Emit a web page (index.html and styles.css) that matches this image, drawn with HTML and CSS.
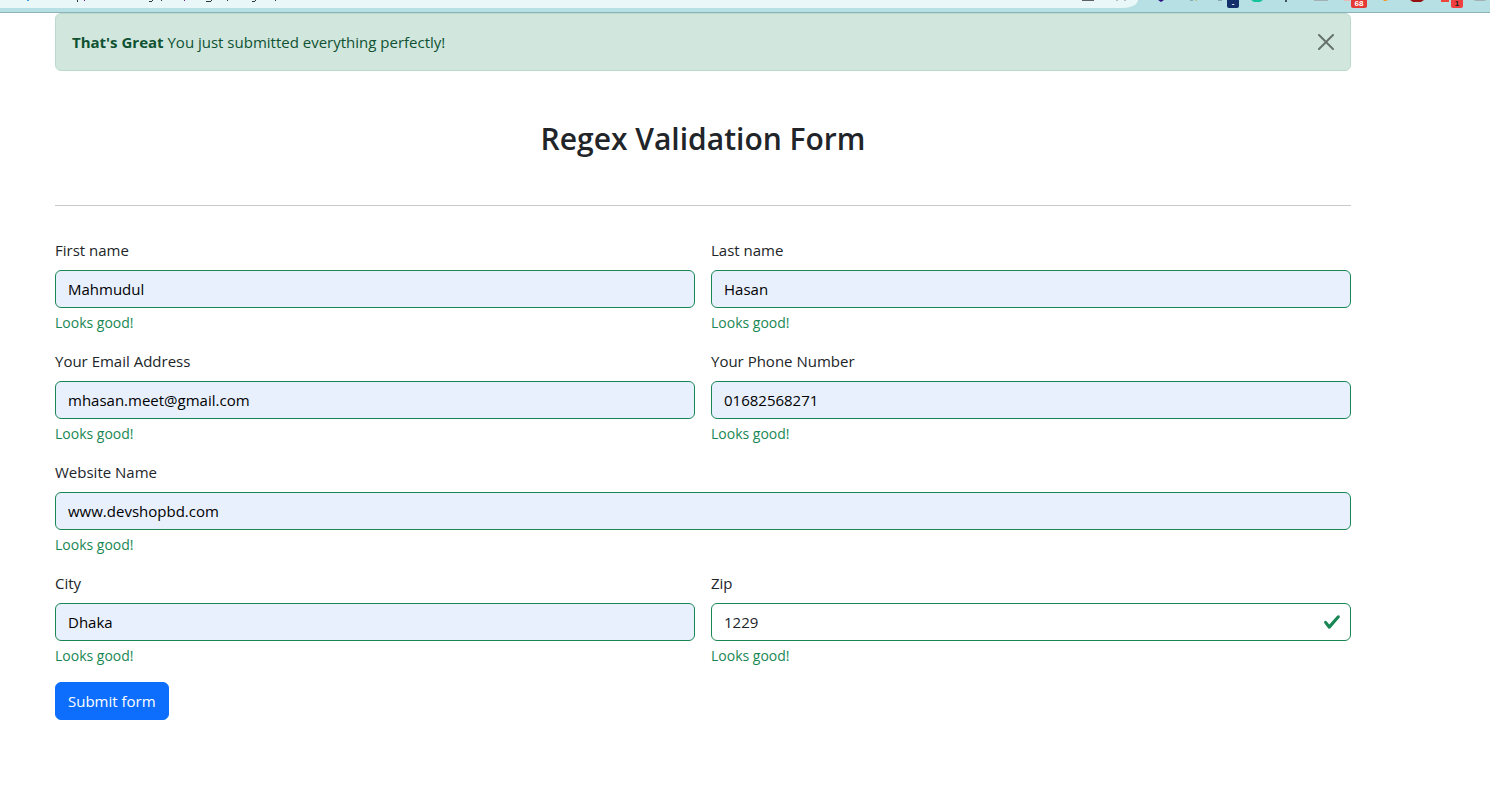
FILE: index.html
```html
<!DOCTYPE html>
<html lang="en">
<head>
<meta charset="utf-8">
<title>Regex Validation Form</title>
<link rel="stylesheet" href="styles.css">
</head>
<body>
<header class="toolbar">
  <div class="address">
    <svg width="290" height="4" aria-hidden="true" fill="#2d3338">
      <path fill="#3b9be8" d="M27 0h2v1h-2z"/>
      <path d="M77 0h1v2h-1zM149 1h3v1h-3zM152 0h1v1h-1zM161 0h1v1h-1zM206 1h5v1h-5zM211 0h1v1h-1zM227 0h1v1h-1zM252 1h3v1h-3zM255 0h1v1h-1zM275 0h1v1h-1z"/>
      <path fill="#701a75" d="M84 0h1v1h-1zM184 0h1v1h-1z"/>
    </svg>
    <svg width="56" height="4" aria-hidden="true">
      <path fill="#5f6368" d="M0 0h12v1h-12z"/>
      <path fill="#b4bdc0" d="M34 0h2v1h-2zM42 0h2v1h-2z"/>
    </svg>
  </div>
  <div class="extensions">
    <svg width="352" height="12" aria-hidden="true">
      <path fill="#2a1080" d="M20 0h6l-3 2z"/>
      <path fill="#8aa9b5" d="M52 0h3v1h-3zM80 0h4v1h-4z"/>
      <path fill="#b9c98f" d="M57 0h2v1h-2z"/>
      <path fill="#15c39a" d="M113 0h12l-3 2h-6z"/>
      <path fill="#44525a" d="M147 0h2v2h-2z"/>
      <path fill="#a5b0b4" d="M176 0h14v1h-14z"/>
      <path fill="#e9b8b4" d="M206 0h6v1h-6z"/>
      <path fill="#f79824" d="M245 0h5l-2 1h-2z"/>
      <path fill="#951111" d="M272 0h14l-3 2h-8z"/>
      <path fill="#f04438" d="M303 0h8v2h-8z"/>
      <path fill="#a5b0b4" d="M335 0h14l-3 1h-8z"/>
    </svg>
    <span class="badge badge-navy">-</span>
    <span class="badge badge-count">68</span>
    <span class="badge badge-one">1</span>
  </div>
</header>
<main class="page">
  <div class="container">
    <div class="alert" role="alert">
      <p class="alert-text"><strong>That's Great</strong> You just submitted everything perfectly!</p>
      <button class="close" type="button" aria-label="Close">
        <svg width="16" height="16" viewBox="0 0 16 16" aria-hidden="true"><path d="M.293.293a1 1 0 0 1 1.414 0L8 6.586 14.293.293a1 1 0 1 1 1.414 1.414L9.414 8l6.293 6.293a1 1 0 0 1-1.414 1.414L8 9.414l-6.293 6.293a1 1 0 0 1-1.414-1.414L6.586 8 .293 1.707a1 1 0 0 1 0-1.414z"/></svg>
      </button>
    </div>
    <h1 class="title">Regex Validation Form</h1>
    <hr class="rule">
    <form class="form">
      <div class="field">
        <label for="first">First name</label>
        <input class="control filled" id="first" type="text" value="Mahmudul">
        <div class="feedback">Looks good!</div>
      </div>
      <div class="field">
        <label for="last">Last name</label>
        <input class="control filled" id="last" type="text" value="Hasan">
        <div class="feedback">Looks good!</div>
      </div>
      <div class="field">
        <label for="email">Your Email Address</label>
        <input class="control filled" id="email" type="text" value="mhasan.meet@gmail.com">
        <div class="feedback">Looks good!</div>
      </div>
      <div class="field">
        <label for="phone">Your Phone Number</label>
        <input class="control filled" id="phone" type="text" value="01682568271">
        <div class="feedback">Looks good!</div>
      </div>
      <div class="field wide">
        <label for="site">Website Name</label>
        <input class="control filled" id="site" type="text" value="www.devshopbd.com">
        <div class="feedback">Looks good!</div>
      </div>
      <div class="field">
        <label for="city">City</label>
        <input class="control filled" id="city" type="text" value="Dhaka">
        <div class="feedback">Looks good!</div>
      </div>
      <div class="field">
        <label for="zip">Zip</label>
        <div class="checked">
          <input class="control" id="zip" type="text" value="1229">
          <svg class="tick" viewBox="0 0 8 8" aria-hidden="true"><path fill="#198754" d="M2.3 6.73.6 4.53c-.4-1.04.46-1.4 1.1-.8l1.1 1.4 3.4-3.8c.6-.63 1.6-.27 1.2.7l-4 4.6c-.43.5-.8.4-1.1.1z"/></svg>
        </div>
        <div class="feedback">Looks good!</div>
      </div>
      <div class="wide">
        <button class="submit" type="submit">Submit form</button>
      </div>
    </form>
  </div>
</main>
</body>
</html>
```
FILE: styles.css
```css
* { box-sizing: border-box; }

body {
  margin: 0;
  background: #fff;
  color: #212529;
  font-family: "Segoe UI", "Open Sans", "Noto Sans", sans-serif;
  font-size: 15px;
  line-height: 24px;
}

.toolbar {
  display: flex;
  height: 13px;
  background: #b7e0e4;
  border-bottom: 1px solid #8db3b9;
}

.address {
  display: flex;
  flex: 1;
  justify-content: space-between;
  height: 8px;
  background: #eaf7f8;
  border-bottom-right-radius: 16px 8px;
}

.extensions { position: relative; display: flex; }

.badge {
  position: absolute;
  top: 0;
  height: 8px;
  border-radius: 0 0 2px 2px;
  color: #fff;
  font-family: "Liberation Sans", sans-serif;
  font-size: 8px;
  font-weight: 700;
  line-height: 8px;
  text-align: center;
}

.badge-navy { left: 89px; width: 12px; background: #14306b; }
.badge-count { left: 213px; width: 16px; background: #e53935; }
.badge-one { left: 313px; width: 12px; background: #f04040; color: #222; }

.page { padding-right: 84px; }

.container {
  max-width: 1320px;
  margin: 0 auto;
  padding: 0 12px;
}

.alert {
  display: flex;
  justify-content: space-between;
  align-items: center;
  padding: 16px;
  border: 1px solid #badbcc;
  border-radius: 6px;
  background: #d1e7dd;
  color: #0f5132;
}

.alert-text { margin: 0; }

.close {
  display: flex;
  padding: 0;
  border: 0;
  background: none;
  opacity: 0.5;
}

.title {
  margin: 48px 0 0;
  font-size: 30px;
  font-weight: 600;
  line-height: 40px;
  text-align: center;
}

.rule {
  margin: 46px 0 32px;
  border: 0;
  border-top: 1px solid #c8c9ca;
}

.form {
  display: grid;
  grid-template-columns: 1fr 1fr;
  gap: 16px;
}

.wide { grid-column: 1 / -1; }

.field { display: flex; flex-direction: column; }

.field label { margin-bottom: 8px; }

.control {
  width: 100%;
  height: 38px;
  padding: 6px 12px;
  border: 1px solid #198754;
  border-radius: 6px;
  background: #fff;
  color: #212529;
  font: inherit;
}

.filled { background: #e8f0fe; color: #000; }

.checked { position: relative; display: flex; }

.tick {
  position: absolute;
  top: 10px;
  right: 10px;
  width: 18px;
  height: 18px;
}

.feedback {
  margin-top: 4px;
  color: #198754;
  font-size: 14px;
  line-height: 21px;
}

.submit {
  height: 38px;
  padding: 6px 12px;
  border: 1px solid #0d6efd;
  border-radius: 6px;
  background: #0d6efd;
  color: #fff;
  font: inherit;
}
```
